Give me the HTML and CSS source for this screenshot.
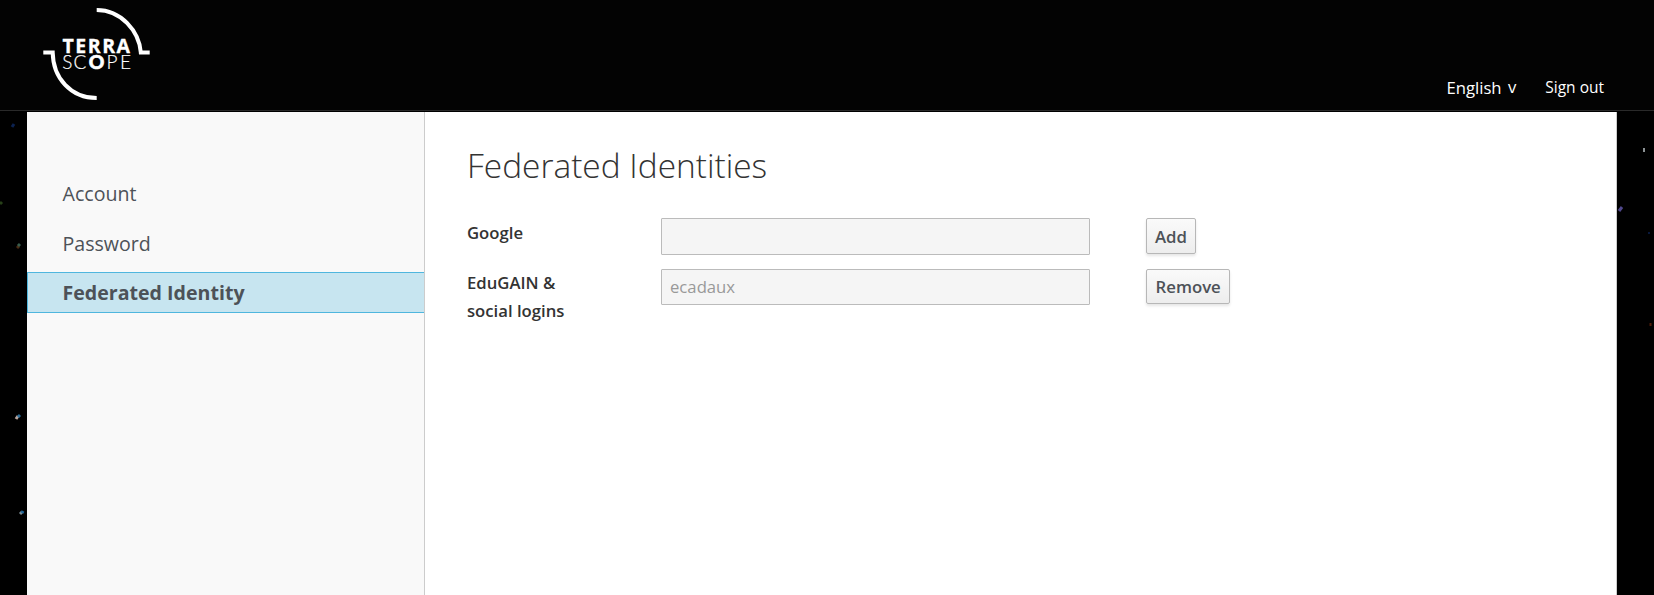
FILE: index.html
```html
<!DOCTYPE html>
<html lang="en">
<head>
<meta charset="utf-8">
<title>Terrascope Account Management</title>
<link rel="stylesheet" href="styles.css">
</head>
<body>
<header class="header">
  <svg class="logo" width="150" height="110" viewBox="0 0 150 110" role="img" aria-label="Terrascope">
    <g fill="none" stroke="#fff" stroke-width="4">
      <path d="M96.7 10C121 10 139 31 140.8 52.400H149.700"/>
      <path d="M43.300 52.400H52.700C53 78 71 98 96.700 98"/>
    </g>
    <g class="logo-text">
      <text class="logo-heavy" x="62.500" y="52.500" textLength="67.500">TERRA</text>
      <text class="logo-light" y="69.300" x="62.200 73.400">SC</text>
      <text class="logo-o" y="69.100" x="88.700" textLength="15.600" lengthAdjust="spacingAndGlyphs">O</text>
      <text class="logo-light" y="69.300" x="106.500 120">PE</text>
    </g>
  </svg>
  <nav class="tools">
    <a class="locale">English <span class="caret">v</span></a>
    <a class="signout">Sign out</a>
  </nav>
</header>
<main class="stage">
  <svg class="stars" width="1654" height="483" viewBox="0 112 1654 483" aria-hidden="true">
    <g stroke-width="3">
      <path stroke="#0c2250" d="M12 127l2-3"/>
      <path stroke="#274018" d="M0 204l2-2"/>
      <path stroke="#4a2c14" d="M17 248l2-2"/><path stroke="#3a5c4c" d="M18 246l2-2"/>
      <path stroke="#b9a49c" d="M16 419l2-3"/><path stroke="#2c6c98" d="M18 417l2-2"/>
      <path stroke="#7c8c94" d="M20 514l2-2"/><path stroke="#20689c" d="M22 513l1-2"/>
      <path stroke="#8c9294" stroke-width="2" d="M1644 148v4"/>
      <path stroke="#50488c" d="M1619 211l3-4"/>
      <path stroke="#08183c" stroke-width="2" d="M1648 233h2"/>
      <path stroke="#501c08" stroke-width="2" d="M1650.500 323v3"/>
    </g>
  </svg>
  <div class="panel">
    <aside class="sidebar">
      <ul class="menu">
        <li><a>Account</a></li>
        <li><a>Password</a></li>
        <li class="active"><a>Federated Identity</a></li>
      </ul>
    </aside>
    <section class="content">
      <h1>Federated Identities</h1>
      <form class="identities">
        <div class="row">
          <label for="google">Google</label>
          <input id="google" disabled>
          <button type="button">Add</button>
        </div>
        <div class="row second">
          <label for="edugain">EduGAIN &amp; social logins</label>
          <input id="edugain" value="ecadaux" disabled>
          <button type="button">Remove</button>
        </div>
      </form>
    </section>
  </div>
</main>
</body>
</html>
```
FILE: styles.css
```css
* { box-sizing: border-box; }
body {
  margin: 0;
  height: 595px;
  overflow: hidden;
  background: #000;
  color: #333;
  font: 16.7px/28px "Open Sans", sans-serif;
}
.header {
  height: 111px;
  display: flex;
  justify-content: space-between;
  border-bottom: 1px solid #292929;
  background: #030303;
  color: #fff;
}
.logo { display: block; }
.logo-text { fill: #fff; font-family: Lato, sans-serif; font-size: 19px; line-height: 1; }
.logo-heavy { font-family: "Open Sans", sans-serif; font-size: 19.5px; font-weight: 700; stroke: #fff; stroke-width: .3px; }
.logo-o { font-weight: 900; stroke: #fff; stroke-width: .6px; }
.logo-light { font-weight: 300; stroke: #fff; stroke-width: .2px; }
.tools { display: flex; padding: 74px 50px 0 0; }
.locale { margin-right: 29px; font-size: 16.7px; }
.caret { display: inline-block; margin-left: 2px; position: relative; top: -1px; }
.signout { font-size: 15.5px; line-height: 26px; }
.stage { position: relative; height: 483px; margin-top: 1px; padding: 0 37px 0 27px; }
.stars { position: absolute; left: 0; top: 0; }
.panel {
  position: relative;
  display: flex;
  height: 100%;
  background: #fff;
  border-right: 1px solid #ccc;
}
.sidebar { width: 398px; background: #f9f9f9; border-right: 1px solid #ccc; }
.menu { margin: 0; padding: 62px 0 0; list-style: none; }
.menu li { height: 41px; margin-bottom: 9px; padding-left: 35.5px; line-height: 39px; font-size: 19.6px; color: #4d5258; }
.menu .active {
  margin-top: -2px;
  padding-left: 34.5px;
  border: 1px solid #4fb6de;
  border-right: 0;
  background: #c7e5f0;
  font-weight: 700;
}
.content { flex: 1; padding: 29px 0 0 42px; }
h1 { margin: 0 0 29px; font-size: 33.45px; line-height: 48px; font-weight: 300; }
.row { display: grid; grid-template-columns: 194px 429px 1fr; align-items: start; height: 51px; }
label { width: 125px; padding-top: 1px; font-weight: 600; }
.second label { padding-top: 0; }
input {
  height: 37px;
  padding: 0 9px;
  border: 1px solid #bbb;
  border-radius: 1px;
  background: #f5f5f5;
  color: #999;
  font: inherit;
}
button {
  justify-self: start;
  height: 36px;
  margin-left: 56px;
  padding: 2px 8px 0;
  border: 1px solid #b7b7b7;
  border-radius: 2px;
  background: linear-gradient(#fafafa, #ededed);
  box-shadow: 0 2px 3px rgba(3, 3, 3, .1);
  color: #4d5258;
  font: 600 16.8px/30px "Open Sans", sans-serif;
}
.second input { height: 36px; padding: 0 8px 2px; }
.second button { height: 35px; padding: 0 8.5px; }
```
